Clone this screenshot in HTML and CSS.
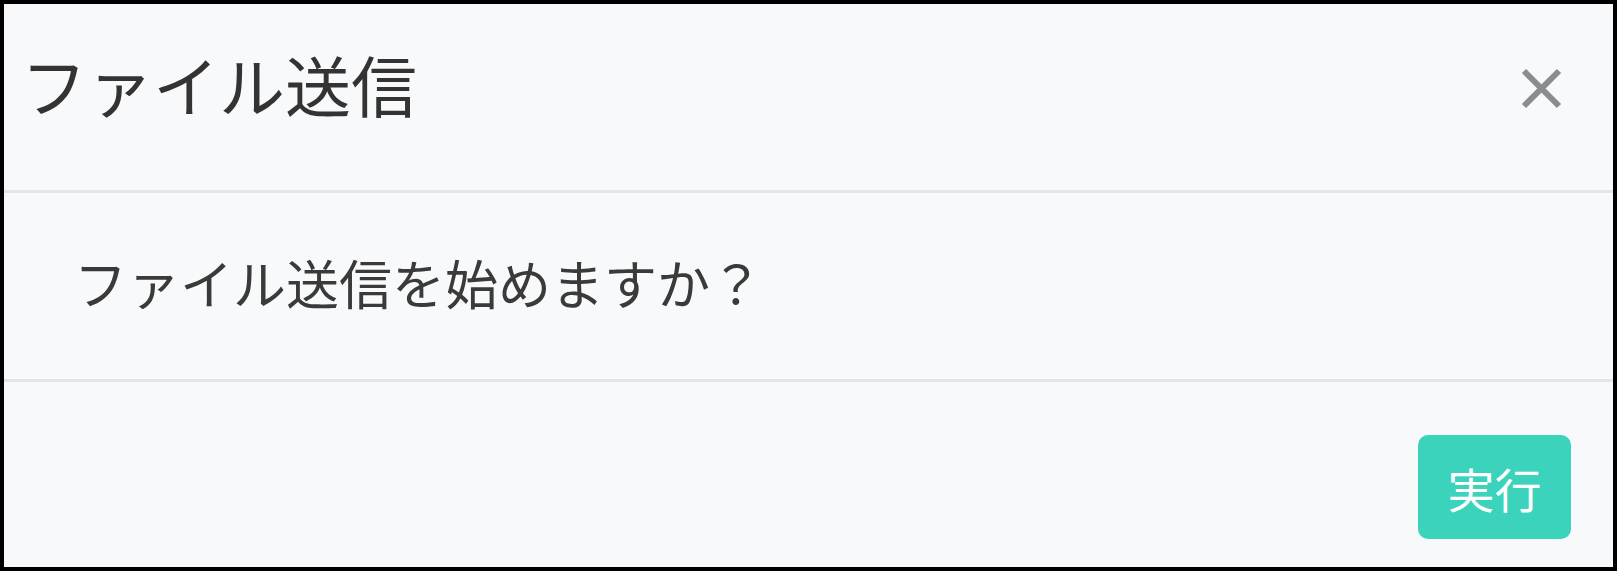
FILE: index.html
```html
<!DOCTYPE html>
<html lang="ja">
<head>
<meta charset="utf-8">
<title>ファイル送信</title>
<link rel="stylesheet" href="styles.css">
</head>
<body>
<div class="modal">
  <div class="modal-header">
    <h5 class="modal-title">ファイル送信</h5>
    <button class="close" type="button" aria-label="Close">
      <svg width="41" height="41" viewBox="0 0 41 41"><path d="M3 3 L38 38 M38 3 L3 38" stroke="#8b8c8d" stroke-width="6" fill="none"/></svg>
    </button>
  </div>
  <div class="modal-body">
    <p class="message">ファイル送信を始めますか？</p>
  </div>
  <div class="modal-footer">
    <button class="btn-run" type="button">実行</button>
  </div>
</div>
</body>
</html>
```

FILE: styles.css
```css
html, body {
  margin: 0;
  padding: 0;
}
body {
  width: 1617px;
  height: 571px;
  background: #f8f9fa;
  font-family: "Noto Sans CJK JP", "Noto Sans", sans-serif;
  color: #333;
}
.modal {
  box-sizing: border-box;
  width: 1617px;
  height: 571px;
  border: 4px solid #000;
  background: #f8f9fa;
  display: flex;
  flex-direction: column;
}
.modal-header {
  height: 186px;
  border-bottom: 3px solid #e3e5e8;
  display: flex;
  align-items: center;
  justify-content: space-between;
  padding: 0 51px 0 17px;
}
.modal-title {
  margin: 0;
  font-size: 66px;
  font-weight: 400;
  line-height: 1;
  color: #333;
  position: relative;
  top: -14px;
}
.close {
  background: none;
  border: 0;
  padding: 0;
  margin: 0;
  width: 41px;
  height: 41px;
  display: flex;
  position: relative;
  top: -9px;
}
.modal-body {
  height: 186px;
  border-bottom: 3px solid #e3e5e8;
  display: flex;
  align-items: center;
  padding: 0 0 0 70px;
}
.message {
  margin: 0;
  font-size: 53px;
  line-height: 1;
  color: #3a3a3a;
  position: relative;
  top: -4px;
}
.modal-footer {
  flex: 1;
  display: flex;
  justify-content: flex-end;
  align-items: flex-start;
  padding: 53px 42px 0 0;
}
.btn-run {
  width: 153px;
  height: 104px;
  border: 0;
  border-radius: 10px;
  background: #3bd3bb;
  color: #fff;
  font-family: "Noto Sans CJK JP", "Noto Sans", sans-serif;
  font-size: 47px;
  line-height: 1;
  padding: 0;
}
```
